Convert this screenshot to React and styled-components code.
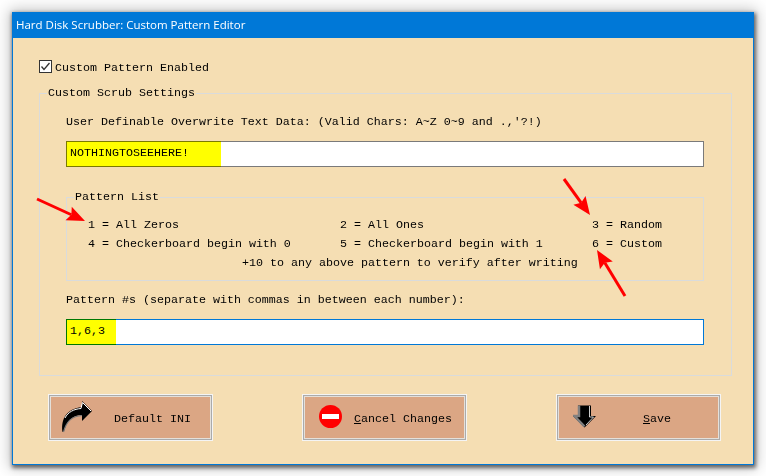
import React from "react";
import styled, { createGlobalStyle } from "styled-components";

const Global = createGlobalStyle`
  html, body { margin: 0; padding: 0; background: #ffffff; width: 766px; height: 476px; overflow: hidden; }
`;
const Page = styled.div`
  position: relative;
  width: 766px;
  height: 476px;
  padding: 12px;
  box-sizing: border-box;
`;
const Window = styled.div`
  width: 742px;
  height: 453px;
  box-sizing: border-box;
  border: 1px solid #0078d7;
  border-top: 0;
  background: #f5deb3;
  box-shadow: 1px 2px 4px 1px rgba(0,0,0,.55), 0 0 14px 3px rgba(0,0,0,.22);
  font-family: "Liberation Mono", "Courier New", monospace;
  font-size: 11.67px;
  color: #000;
`;
const TitleBar = styled.div`
  height: 26px;
  background: #0078d7;
  color: #fff;
  font-family: "Open Sans", "Liberation Sans", Arial, sans-serif;
  font-size: 11.5px;
  line-height: 26px;
  padding-left: 3px;
`;
const Body = styled.div`
  padding: 21px 21px 0 26px;
`;
const CheckRow = styled.label`
  display: flex;
  align-items: flex-start;
  gap: 3px;
  height: 14px;
`;
const CheckText = styled.span`
  line-height: 18px;
  height: 14px;
`;
const CheckBox = styled.svg`
  width: 13px;
  height: 13px;
  flex: none;
  margin-top: 1px;
`;
const Group = styled.fieldset`
  margin: 0;
  padding: 0 0 0 26px;
  border: 1px solid #d9dbdc;
  min-inline-size: 0;
`;
const Outer = styled(Group)`
  margin-top: 13px;
  height: 290px;
  box-sizing: border-box;
  padding-top: 15px;
  padding-right: 27px;
`;
const Legend = styled.legend`
  margin-left: ${p => p.$left}px;
  padding: 0 1px;
  line-height: 14px;
`;
const Label = styled.div`
  line-height: 14px;
  height: 14px;
`;
const Field = styled.div`
  position: relative;
  height: 26px;
  box-sizing: border-box;
  margin-top: 12px;
  border: 1px solid ${p => p.$focus ? "#0078d7" : "#7a7a7a"};
  background: #fff;
  line-height: 23px;
  padding-left: 3px;
`;
const Highlight = styled.span`
  position: absolute;
  left: -1px;
  top: -1px;
  bottom: -1px;
  background: #ffff00;
  mix-blend-mode: multiply;
`;
const ListGroup = styled(Group)`
  margin-top: 23px;
  height: 91px;
  box-sizing: border-box;
  padding: 0 0 0 21px;
`;
const ListGrid = styled.div`
  display: grid;
  grid-template-columns: 252px 252px 1fr;
  grid-auto-rows: 19px;
  line-height: 19px;
  margin-top: 12px;
`;
const Note = styled.div`
  grid-column: 1 / -1;
  padding-left: 154px;
`;
const PatternLabel = styled(Label)`
  margin-top: 12px;
`;
const ButtonRow = styled.div`
  display: flex;
  gap: 89px;
  margin-top: 18px;
  margin-left: 9px;
`;
const Button = styled.button`
  display: flex;
  align-items: center;
  width: 165px;
  height: 47px;
  box-sizing: border-box;
  padding: 0;
  background: #dba684;
  border: 2px solid #ababab;
  outline: 1px solid #f4f4f4;
  outline-offset: -1px;
  box-shadow: inset 0 0 0 1px #e4e0da;
  font: inherit;
  color: #000;
`;
const IconSlot = styled.span`
  width: ${p => p.$w}px;
  box-sizing: border-box;
  flex: none;
  display: flex;
  padding-left: ${p => p.$left}px;
  padding-bottom: 2px;
`;
const Caption = styled.span`
  flex: 1;
  text-align: left;
  padding-top: 2px;
  padding-left: ${p => p.$pad || 0}px;
  u { text-underline-offset: 1px; }
`;
const Arrows = styled.svg`
  position: absolute;
  left: 0;
  top: 0;
  pointer-events: none;
`;

function Arrow({ x1, y1, x2, y2 }) {
  const a = Math.atan2(y2 - y1, x2 - x1);
  const L = 18, W = 7.5;
  const bx = x2 - L * Math.cos(a), by = y2 - L * Math.sin(a);
  const nx = -Math.sin(a), ny = Math.cos(a);
  const nk = 15;
  const kx = x2 - nk * Math.cos(a), ky = y2 - nk * Math.sin(a);
  return (
    <g fill="#ff0000" stroke="none">
      <line x1={x1} y1={y1} x2={kx} y2={ky} stroke="#ff0000" strokeWidth="3" />
      <polygon points={`${x2},${y2} ${bx + nx * W},${by + ny * W} ${kx},${ky} ${bx - nx * W},${by - ny * W}`} />
    </g>
  );
}

export default function App() {
  return (
    <Page>
      <Global />
      <Window>
        <TitleBar>Hard Disk Scrubber: Custom Pattern Editor</TitleBar>
        <Body>
          <CheckRow>
            <CheckBox viewBox="0 0 13 13">
              <rect x=".5" y=".5" width="12" height="12" fill="#fff" stroke="#333" />
              <path d="M2.5 6.5 L5 9.5 L10.5 3" fill="none" stroke="#333" strokeWidth="1.3" />
            </CheckBox>
            <CheckText>Custom Pattern Enabled</CheckText>
          </CheckRow>
          <Outer>
            <Legend $left={-19}>Custom Scrub Settings</Legend>
            <Label>User Definable Overwrite Text Data: (Valid Chars: A~Z 0~9 and .,'?!)</Label>
            <Field>
              NOTHINGTOSEEHERE!
              <Highlight style={{ width: 155 }} />
            </Field>
            <ListGroup>
              <Legend $left={-14}>Pattern List</Legend>
              <ListGrid>
                <div>1 = All Zeros</div>
                <div>2 = All Ones</div>
                <div>3 = Random</div>
                <div>4 = Checkerboard begin with 0</div>
                <div>5 = Checkerboard begin with 1</div>
                <div>6 = Custom</div>
                <Note>+10 to any above pattern to verify after writing</Note>
              </ListGrid>
            </ListGroup>
            <PatternLabel>Pattern #s (separate with commas in between each number):</PatternLabel>
            <Field $focus>
              1,6,3
              <Highlight style={{ width: 50 }} />
            </Field>
          </Outer>
          <ButtonRow>
            <Button>
              <IconSlot $w={54} $left={11}>
                <svg width="32" height="33" viewBox="0 0 32 33">
                  <path d="M1.5 32 C0 22 3 9 21 7 L21 1 L31 11 L21 21 L21 15 C12 15 6 20 3 31 Z" fill="#000" />
                  <path d="M2.5 32 C5 22 11 16 21 15.5" fill="none" stroke="#7a7a7a" strokeWidth="1.2" />
                  <path d="M4 18 C7 12 13 9 20 8.5 L21.5 2.5 L30 11" fill="none" stroke="#fff" strokeWidth="1" />
                </svg>
              </IconSlot>
              <Caption $pad={10}>Default INI</Caption>
            </Button>
            <Button>
              <IconSlot $w={50} $left={15}>
                <svg width="23" height="23" viewBox="0 0 23 23">
                  <circle cx="11.5" cy="11.5" r="11.5" fill="#ff0000" />
                  <rect x="3" y="9" width="17" height="5" fill="#fff" />
                </svg>
              </IconSlot>
              <Caption><u>C</u>ancel Changes</Caption>
            </Button>
            <Button>
              <IconSlot $w={56} $left={15}>
                <svg width="23" height="23" viewBox="0 0 23 23">
                  <path d="M5 0.5 H18 V11 H23 L11.5 22.5 L0 11 H5 Z" fill="#000" />
                  <path d="M6 0.5 V11 H1.5 L11.5 21.5" fill="none" stroke="#808080" strokeWidth="2.5" />
                  <path d="M16.5 1 V12 H20.5 L13 20" fill="none" stroke="#fff" strokeWidth=".8" />
                </svg>
              </IconSlot>
              <Caption $pad={29}><u>S</u>ave</Caption>
            </Button>
          </ButtonRow>
        </Body>
      </Window>
      <Arrows width="766" height="476" viewBox="0 0 766 476">
        <Arrow x1={37} y1={199} x2={85} y2={221} />
        <Arrow x1={564} y1={179} x2={590} y2={215} />
        <Arrow x1={625} y1={296} x2={597} y2={250} />
      </Arrows>
    </Page>
  );
}
